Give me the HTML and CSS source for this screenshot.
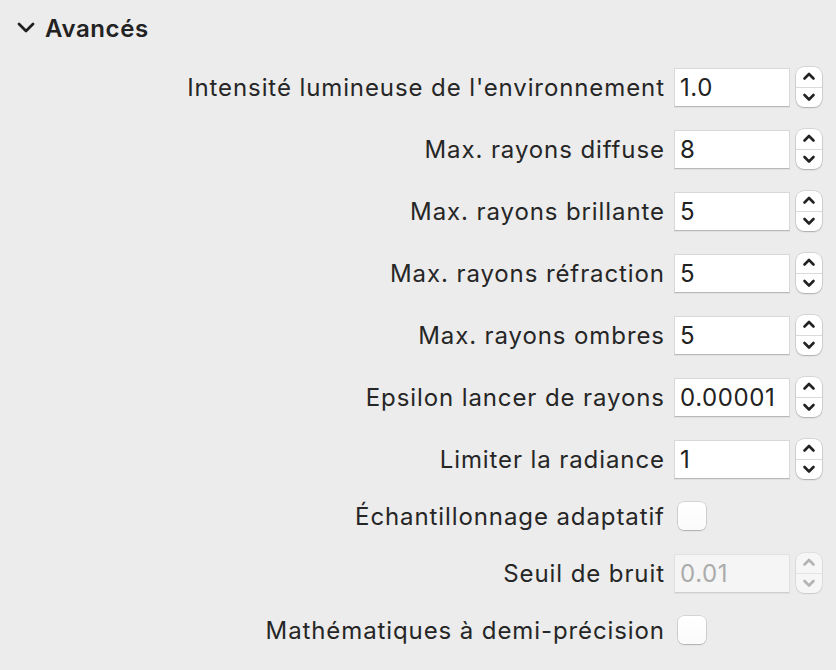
FILE: index.html
```html
<!DOCTYPE html>
<html lang="fr">
<head>
<meta charset="utf-8">
<link rel="stylesheet" href="styles.css">
</head>
<body>
<div class="panel">
  <div class="header">
    <svg class="disclosure" width="18" height="12" viewBox="0 0 18 12"><path d="M2 2 L9 9 L16 2" fill="none" stroke="#1f1f1f" stroke-width="2.8" stroke-linecap="round" stroke-linejoin="round"/></svg>
    <span class="title">Avancés</span>
  </div>
  <div class="form">
    <div class="row"><label class="lbl">Intensité lumineuse de l'environnement</label><div class="ctl"><div class="field">1.0</div><div class="stepper"><svg viewBox="0 0 26 40" width="26" height="40"><path class="chev" d="M8.5 11.5 L13 7 L17.5 11.5 M8.5 28 L13 32.5 L17.5 28"/></svg></div></div></div>
    <div class="row"><label class="lbl">Max. rayons diffuse</label><div class="ctl"><div class="field">8</div><div class="stepper"><svg viewBox="0 0 26 40" width="26" height="40"><path class="chev" d="M8.5 11.5 L13 7 L17.5 11.5 M8.5 28 L13 32.5 L17.5 28"/></svg></div></div></div>
    <div class="row"><label class="lbl">Max. rayons brillante</label><div class="ctl"><div class="field">5</div><div class="stepper"><svg viewBox="0 0 26 40" width="26" height="40"><path class="chev" d="M8.5 11.5 L13 7 L17.5 11.5 M8.5 28 L13 32.5 L17.5 28"/></svg></div></div></div>
    <div class="row"><label class="lbl">Max. rayons réfraction</label><div class="ctl"><div class="field">5</div><div class="stepper"><svg viewBox="0 0 26 40" width="26" height="40"><path class="chev" d="M8.5 11.5 L13 7 L17.5 11.5 M8.5 28 L13 32.5 L17.5 28"/></svg></div></div></div>
    <div class="row"><label class="lbl">Max. rayons ombres</label><div class="ctl"><div class="field">5</div><div class="stepper"><svg viewBox="0 0 26 40" width="26" height="40"><path class="chev" d="M8.5 11.5 L13 7 L17.5 11.5 M8.5 28 L13 32.5 L17.5 28"/></svg></div></div></div>
    <div class="row"><label class="lbl">Epsilon lancer de rayons</label><div class="ctl"><div class="field">0.00001</div><div class="stepper"><svg viewBox="0 0 26 40" width="26" height="40"><path class="chev" d="M8.5 11.5 L13 7 L17.5 11.5 M8.5 28 L13 32.5 L17.5 28"/></svg></div></div></div>
    <div class="row"><label class="lbl">Limiter la radiance</label><div class="ctl"><div class="field">1</div><div class="stepper"><svg viewBox="0 0 26 40" width="26" height="40"><path class="chev" d="M8.5 11.5 L13 7 L17.5 11.5 M8.5 28 L13 32.5 L17.5 28"/></svg></div></div></div>
    <div class="row check-row"><label class="lbl">Échantillonnage adaptatif</label><div class="ctl"><div class="checkbox"></div></div></div>
    <div class="row"><label class="lbl">Seuil de bruit</label><div class="ctl disabled"><div class="field">0.01</div><div class="stepper"><svg viewBox="0 0 26 40" width="26" height="40"><path class="chev" d="M8.5 11.5 L13 7 L17.5 11.5 M8.5 28 L13 32.5 L17.5 28"/></svg></div></div></div>
    <div class="row check-row"><label class="lbl">Mathématiques à demi-précision</label><div class="ctl"><div class="checkbox"></div></div></div>
  </div>
</div>
</body>
</html>
```
FILE: styles.css
```css
html, body {
  margin: 0;
  padding: 0;
  background: #ececec;
}
body {
  width: 836px;
  height: 670px;
  overflow: hidden;
  font-family: Inter, "Noto Sans", "Liberation Sans", sans-serif;
  color: #262626;
}
.panel {
  padding: 12px 0 0 0;
}
.header {
  display: flex;
  align-items: center;
  height: 32px;
  padding-left: 17px;
  gap: 10px;
}
.disclosure {
  display: block;
}
.title {
  font-size: 24px;
  font-weight: 600;
  color: #222;
  letter-spacing: 0.6px;
}
.form {
  display: flex;
  flex-direction: column;
  gap: 22px;
  margin-top: 23px;
}
.row {
  display: grid;
  grid-template-columns: 664px 1fr;
  align-items: center;
  height: 40px;
}
.row.check-row {
  height: 30px;
}
.lbl {
  text-align: right;
  font-size: 24px;
  letter-spacing: 0.9px;
  margin-right: -0.9px;
  color: #262626;
  white-space: nowrap;
}
.ctl {
  display: flex;
  align-items: center;
  gap: 6px;
  padding-left: 10px;
}
.field {
  box-sizing: border-box;
  width: 116px;
  height: 39px;
  background: #fff;
  border: 1px solid #d8d8d8;
  border-bottom-color: #b9b9b9;
  box-shadow: 0 1px 0 rgba(0,0,0,0.05);
  font-size: 24px;
  letter-spacing: 0.6px;
  line-height: 37px;
  padding-left: 5px;
  color: #222;
}
.stepper {
  position: relative;
  box-sizing: border-box;
  width: 26px;
  height: 40px;
  background: #fff;
  border-radius: 8px;
  box-shadow: 0 0 0 0.5px rgba(0,0,0,0.18), 0 1px 1.5px rgba(0,0,0,0.2);
}
.stepper svg {
  display: block;
  position: relative;
}
.stepper::after {
  content: "";
  position: absolute;
  left: 0;
  right: 0;
  top: 19.5px;
  height: 1px;
  background: #dadada;
}
.chev {
  fill: none;
  stroke: #222;
  stroke-width: 2.6;
  stroke-linecap: round;
  stroke-linejoin: round;
}
.disabled .field {
  background: #f5f5f5;
  border-color: #e2e2e2;
  border-bottom-color: #cfcfcf;
  color: #ababab;
}
.disabled .stepper {
  background: #f6f6f6;
  box-shadow: 0 0 0 0.5px rgba(0,0,0,0.1), 0 1px 1.5px rgba(0,0,0,0.1);
}
.disabled .stepper::after {
  background: #e4e4e4;
}
.disabled .chev {
  stroke: #b3b3b3;
}
.checkbox {
  box-sizing: border-box;
  width: 28px;
  height: 28px;
  margin-left: 4px;
  border-radius: 6px;
  background: linear-gradient(#fff, #fafafa);
  box-shadow: 0 0 0 0.5px rgba(0,0,0,0.2), 0 1px 1.5px rgba(0,0,0,0.18);
}
```
